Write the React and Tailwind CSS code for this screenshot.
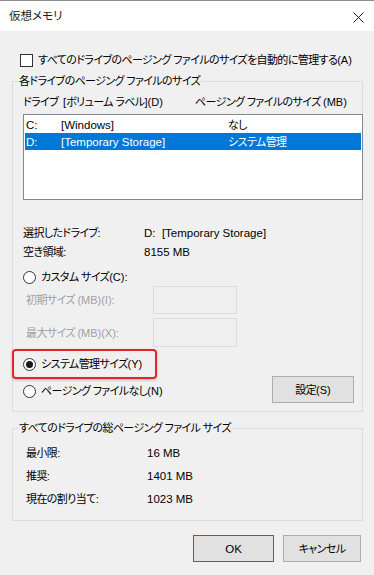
import React from 'react';

const latin = 'text-[11.5px] tracking-normal';

// inline Latin run inside a Japanese label
function L({ children }) {
  return <span className="tracking-normal whitespace-pre">{children}</span>;
}

function Radio({ checked }) {
  return (
    <span className="w-[13px] h-[13px] rounded-full border border-[#333] bg-white flex items-center justify-center shrink-0">
      {checked && <span className="w-[7px] h-[7px] rounded-full bg-[#1a1a1a]" />}
    </span>
  );
}

function Row({ label, value }) {
  return (
    <div className="flex h-[16px] items-center">
      <span className="w-[121px]">{label}</span>
      <span className={`whitespace-pre ${latin}`}>{value}</span>
    </div>
  );
}

export default function App() {
  return (
    <div className="w-[374px] h-[575px] bg-[#f0f0f0] flex flex-col text-[11px] leading-[16px] tracking-[-0.6px] text-black overflow-hidden whitespace-nowrap font-['Liberation_Sans','Noto_Sans_CJK_JP',sans-serif] [font-feature-settings:'palt']">
      {/* Title bar */}
      <div className="h-[31px] bg-white border-t border-[#8c8c8c] flex items-center justify-between pl-[9px] pr-[10px] shrink-0">
        <span className="text-[11.5px] tracking-normal text-[#1a1a1a]">仮想メモリ</span>
        <svg width="11" height="11" viewBox="0 0 11 11" className="mt-[2px]">
          <path d="M0.5 0.5 L10.5 10.5 M10.5 0.5 L0.5 10.5" stroke="#222" strokeWidth="1" fill="none" />
        </svg>
      </div>

      <div className="flex flex-col px-[11px]">
        {/* Auto-manage checkbox */}
        <label className="flex items-center gap-[5px] h-[16px] mt-[21px] pl-[9px]">
          <span className="w-[13px] h-[13px] border border-[#333] bg-white shrink-0" />
          <span>すべてのドライブのページング ファイルのサイズを自動的に管理する<L>(A)</L></span>
        </label>

        {/* Per-drive group */}
        <fieldset className="mt-[5px] ml-[1px] border border-[#dcdcdc] pl-[10px] pr-0 pb-[8px] flex flex-col">
          <legend className="ml-[-5px] px-[1px] leading-[16px]">各ドライブのページング ファイルのサイズ</legend>
          <div className="flex h-[16px] items-center mt-[5px]">
            <span className="w-[172px] whitespace-pre">ドライブ  <L>[</L>ボリューム ラベル<L>](D)</L></span>
            <span>ページング ファイルのサイズ <L>(MB)</L></span>
          </div>
          <div className={`mt-[4px] h-[86px] bg-white border border-[#828790] p-[1px] -mr-[1px] ${latin}`}>
            <div className="flex h-[17px] items-center pl-[1px]">
              <span className="w-[35px]">C:</span>
              <span className="w-[167px]">[Windows]</span>
              <span className="text-[11px] tracking-[-0.6px]">なし</span>
            </div>
            <div className="flex h-[17px] items-center pl-[1px] bg-[#0078d7] text-white">
              <span className="w-[35px]">D:</span>
              <span className="w-[167px]">[Temporary Storage]</span>
              <span className="text-[11px] tracking-[-0.6px]">システム管理</span>
            </div>
          </div>

          <div className="mt-[25px] flex flex-col gap-[3px]">
            <Row label="選択したドライブ:" value="D:  [Temporary Storage]" />
            <Row label="空き領域:" value="8155 MB" />
          </div>

          <label className="flex items-center gap-[5px] h-[16px] mt-[9px]">
            <Radio />
            <span>カスタム サイズ<L>(C):</L></span>
          </label>

          <div className="flex items-center mt-[1px] text-[#a0a0a0] pl-[3px]">
            <span className="w-[127px]">初期サイズ <L>(MB)(I):</L></span>
            <span className="w-[84px] h-[28px] border border-[#dcdcdc] bg-[#f0f0f0]" />
          </div>
          <div className="flex items-center mt-[4px] text-[#a0a0a0] pl-[3px]">
            <span className="w-[127px]">最大サイズ <L>(MB)(X):</L></span>
            <span className="w-[84px] h-[29px] border border-[#dcdcdc] bg-[#f0f0f0]" />
          </div>

          <div className="flex items-end justify-between pr-[8px]">
            <div className="flex flex-col pb-[4px]">
              <div className="mt-[2px] -ml-[11px] w-[145px] h-[30px] border-2 border-[#e3242b] rounded-[4px] shadow-[0_1px_3px_rgba(0,0,0,0.25)] flex items-center gap-[5px] pl-[9px]">
                <Radio checked />
                <span>システム管理サイズ<L>(Y)</L></span>
              </div>
              <label className="flex items-center gap-[5px] h-[16px] mt-[4px]">
                <Radio />
                <span>ページング ファイルなし<L>(N)</L></span>
              </label>
            </div>
            <button className="w-[82px] h-[27px] bg-[#e1e1e1] border border-[#adadad] flex items-center justify-center">
              <span>設定<L>(S)</L></span>
            </button>
          </div>
        </fieldset>

        {/* Totals group */}
        <fieldset className="mt-[8px] ml-[1px] border border-[#dcdcdc] pl-[13px] pb-[13px] flex flex-col">
          <legend className="ml-[-8px] px-[1px] leading-[16px]">すべてのドライブの総ページング ファイル サイズ</legend>
          <div className="mt-[9px] flex flex-col gap-[7px]">
            <Row label="最小限:" value="16 MB" />
            <Row label="推奨:" value="1401 MB" />
            <Row label="現在の割り当て:" value="1023 MB" />
          </div>
        </fieldset>

        {/* Dialog buttons */}
        <div className="flex justify-end gap-[9px] mt-[14px] pr-[2px]">
          <button className={`w-[81px] h-[27px] bg-[#e1e1e1] border border-[#0078d7] flex items-center justify-center ${latin}`}>
            OK
          </button>
          <button className="w-[78px] h-[27px] bg-[#e1e1e1] border border-[#adadad] flex items-center justify-center">
            キャンセル
          </button>
        </div>
      </div>
    </div>
  );
}
